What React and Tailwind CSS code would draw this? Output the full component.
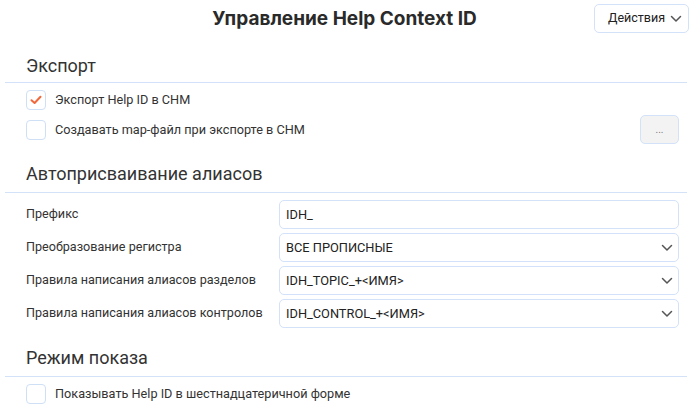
import { useState } from "react";

function Chevron({ className = "" }) {
  return (
    <svg width="12" height="8" viewBox="0 0 12 8" className={className}>
      <path d="M1.5 1.5 L6 6 L10.5 1.5" fill="none" stroke="#555" strokeWidth="1.5" strokeLinecap="round" strokeLinejoin="round" />
    </svg>
  );
}

function Checkbox({ checked, onChange }) {
  return (
    <button
      type="button"
      onClick={() => onChange(!checked)}
      className="w-5 h-5 shrink-0 rounded-[4px] border border-[#cfdff6] bg-white flex items-center justify-center"
    >
      {checked && (
        <svg width="12" height="10" viewBox="0 0 12 10">
          <path d="M1.5 5.2 L4.6 8 L10.5 1.8" fill="none" stroke="#f0683c" strokeWidth="2" strokeLinecap="round" strokeLinejoin="round" />
        </svg>
      )}
    </button>
  );
}

function SectionTitle({ children, className = "pb-[6px]" }) {
  return (
    <div className={`mx-[5px] px-[21px] border-b border-[#d3e2f8] text-[18px] leading-6 text-[#333] ${className}`}>
      {children}
    </div>
  );
}

function SelectRow({ label, value, options, onChange }) {
  return (
    <div className="flex items-center h-[29px]">
      <div className="w-[253px] text-[12.6px] text-[#333]">{label}</div>
      <div className="relative w-[400px] h-full">
        <select
          value={value}
          onChange={(e) => onChange(e.target.value)}
          className="appearance-none w-full h-full rounded-[5px] border border-[#d3e2f8] bg-white pl-[6px] text-[12.8px] text-[#222] outline-none"
        >
          {options.map((o) => (
            <option key={o} value={o}>{o}</option>
          ))}
        </select>
        <Chevron className="absolute right-[6px] top-[11px] pointer-events-none" />
      </div>
    </div>
  );
}

export default function App() {
  const [exportIds, setExportIds] = useState(true);
  const [mapFile, setMapFile] = useState(false);
  const [hex, setHex] = useState(false);
  const [prefix, setPrefix] = useState("IDH_");
  const [caseMode, setCaseMode] = useState("ВСЕ ПРОПИСНЫЕ");
  const [topicRule, setTopicRule] = useState("IDH_TOPIC_+<ИМЯ>");
  const [controlRule, setControlRule] = useState("IDH_CONTROL_+<ИМЯ>");

  return (
    <div className="w-[692px] h-[407px] overflow-hidden bg-white text-[#333]" style={{ fontFamily: "Roboto, 'Liberation Sans', sans-serif" }}>
      {/* header */}
      <div className="grid grid-cols-[1fr_auto_1fr] items-center pt-1 pr-[3px] h-[37px]">
        <div />
        <h1 className="text-[19px] font-bold text-[#2a2a2a] pb-[3px]" style={{ fontFamily: "Inter, sans-serif" }}>
          Управление Help Context ID
        </h1>
        <div className="flex justify-end self-start">
          <button className="flex items-center justify-between h-[29px] w-[95px] pl-[13px] pr-[6px] rounded-[5px] border border-[#d3e2f8] bg-white text-[12.5px] text-[#222]">
            Действия
            <Chevron />
          </button>
        </div>
      </div>

      {/* export */}
      <div className="mt-[17px]">
        <SectionTitle className="pb-[4px]">Экспорт</SectionTitle>
        <div className="pl-[26px] pr-[13px] pt-[7px] flex flex-col gap-[5px]">
          <div className="flex items-center gap-[9px] h-5">
            <Checkbox checked={exportIds} onChange={setExportIds} />
            <span className="text-[12.7px]">Экспорт Help ID в CHM</span>
          </div>
          <div className="flex items-center h-[29px]">
            <Checkbox checked={mapFile} onChange={setMapFile} />
            <span className="ml-[9px] text-[12.7px]">Создавать map-файл при экспорте в CHM</span>
            <button className="ml-auto w-[39px] h-[29px] rounded-[5px] border border-[#d3e2f8] bg-[#f3f3f3] text-[10px] text-[#777] leading-none">
              ...
            </button>
          </div>
        </div>
      </div>

      {/* aliases */}
      <div className="mt-[18px]">
        <SectionTitle>Автоприсваивание алиасов</SectionTitle>
        <div className="pl-[26px] pt-[7px] flex flex-col gap-1">
          <div className="flex items-center h-[29px]">
            <div className="w-[253px] text-[12.6px]">Префикс</div>
            <input
              value={prefix}
              onChange={(e) => setPrefix(e.target.value)}
              className="w-[400px] h-full rounded-[5px] border border-[#d3e2f8] bg-white px-[6px] text-[12.8px] text-[#222] outline-none"
            />
          </div>
          <SelectRow
            label="Преобразование регистра"
            value={caseMode}
            onChange={setCaseMode}
            options={["ВСЕ ПРОПИСНЫЕ", "все строчные", "Без изменений"]}
          />
          <SelectRow
            label="Правила написания алиасов разделов"
            value={topicRule}
            onChange={setTopicRule}
            options={["IDH_TOPIC_+<ИМЯ>", "<ИМЯ>"]}
          />
          <SelectRow
            label="Правила написания алиасов контролов"
            value={controlRule}
            onChange={setControlRule}
            options={["IDH_CONTROL_+<ИМЯ>", "<ИМЯ>"]}
          />
        </div>
      </div>

      {/* display */}
      <div className="mt-[18px]">
        <SectionTitle>Режим показа</SectionTitle>
        <div className="pl-[26px] pt-[7px] flex items-center gap-[9px] h-5 box-content">
          <Checkbox checked={hex} onChange={setHex} />
          <span className="text-[12.7px]">Показывать Help ID в шестнадцатеричной форме</span>
        </div>
      </div>
    </div>
  );
}
